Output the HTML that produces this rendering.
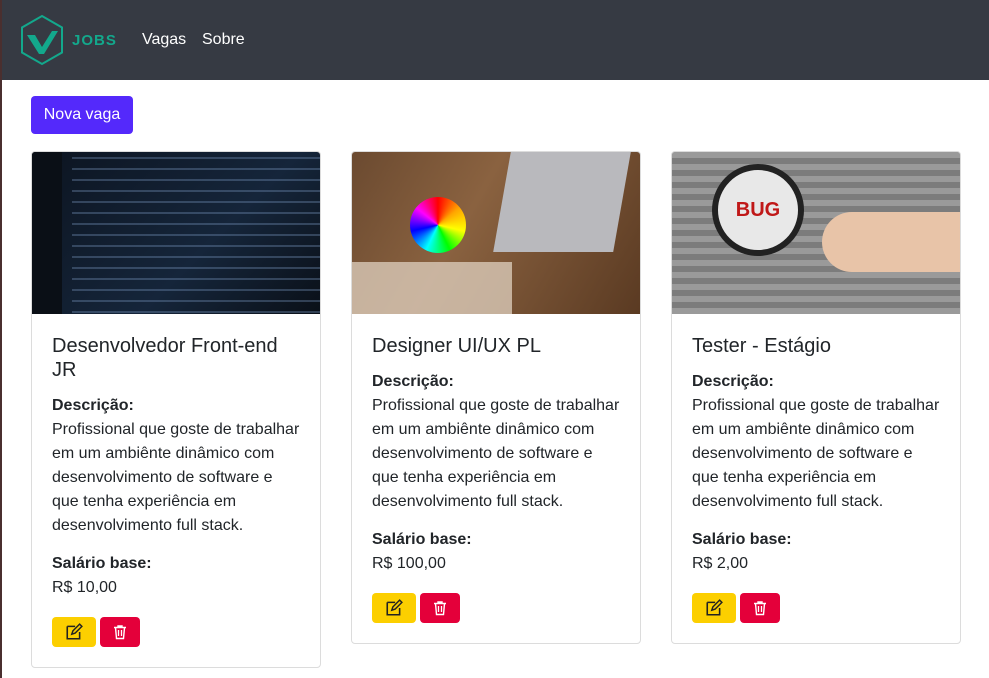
<!DOCTYPE html>
<html><head><meta charset="utf-8"><style>
*{box-sizing:border-box;margin:0;padding:0}
body{width:989px;height:678px;overflow:hidden;background:#fff;font-family:"Liberation Sans",sans-serif;color:#212529;position:relative}
.lb{position:absolute;left:0;top:0;width:2px;height:678px;background:#4a2f2f;z-index:5}
.nav{height:80px;background:#363a43;position:relative}
.nav a{position:absolute;top:31px;color:#fff;font-size:16px;text-decoration:none}
.btn{position:absolute;left:31px;top:96px;width:102px;height:38px;background:#5429fb;border-radius:4px;color:#fff;font-size:16px;line-height:38px;text-align:center}
.card{position:absolute;top:151px;width:290px;border:1px solid #dcdcdc;border-radius:4px;overflow:hidden}
.img{height:162px}
.body{padding:20px 20px 0 20px;font-size:16px;line-height:24px}
h5{font-size:20px;font-weight:400;line-height:24px;margin-bottom:12px}
b{font-weight:700}
.sal{margin-top:14px}
.ab{display:flex;gap:4px;margin-top:17px;margin-bottom:20px}
.e,.d{width:44px;height:30px;border-radius:4px;display:flex;align-items:center;justify-content:center}
.e{background:#fccf00}.d{background:#e4003a;width:40px}
</style></head><body>
<div class="lb"></div>
<div class="nav">
<svg style="position:absolute;left:20px;top:14px" width="100" height="52" viewBox="0 0 100 52">
<polygon points="22,2 42,13.5 42,38.5 22,50 2,38.5 2,13.5" fill="none" stroke="#13a88c" stroke-width="2"/>
<path d="M7,21 L15,21 L22,33 L32,17 L38,17 L24,40 L19,40 Z" fill="#13a88c"/>
<text x="52" y="31" font-family="Liberation Sans" font-weight="900" font-size="15" fill="#13a88c" letter-spacing="1">JOBS</text>
</svg>
<a style="left:142px">Vagas</a><a style="left:202px">Sobre</a>
</div>
<div class="btn">Nova vaga</div>

<svg width="0" height="0" style="position:absolute"><defs>
<symbol id="ed" viewBox="0 0 16 16"><path d="M2 3h7M2 3v11h11V8" fill="none" stroke="#222" stroke-width="1.4"/><path d="M6 10l1-3 6-6 2 2-6 6z" fill="none" stroke="#222" stroke-width="1.3"/></symbol>
<symbol id="tr" viewBox="0 0 16 16"><path d="M2 3.5h12M6 3.5V2h4v1.5M3.5 3.5l1 11h7l1-11" fill="none" stroke="#fff" stroke-width="1.4"/><path d="M6.5 6v6M9.5 6v6" stroke="#fff" stroke-width="1.3"/></symbol>
</defs></svg>

<div class="card" style="left:31px">
<div class="img" style="background:linear-gradient(135deg,#0c1420,#15253a 60%,#0a1018);position:relative">
<div style="position:absolute;left:0;top:0;width:30px;height:162px;background:#0a0f16"></div>
<div style="position:absolute;left:40px;top:0;right:0;bottom:0;background:repeating-linear-gradient(180deg,transparent 0 5px,rgba(120,150,190,.35) 5px 7px,transparent 7px 11px)"></div>
</div>
<div class="body"><h5>Desenvolvedor Front-end JR</h5>
<b>Descrição:</b><br>Profissional que goste de trabalhar em um ambiênte dinâmico com desenvolvimento de software e que tenha experiência em desenvolvimento full stack.<div class="sal"><b>Salário base:</b><br>R$ 10,00</div>
<div class="ab"><div class="e"><svg width="18" height="18"><use href="#ed"/></svg></div><div class="d"><svg width="16" height="18"><use href="#tr"/></svg></div></div></div></div>

<div class="card" style="left:351px">
<div class="img" style="background:linear-gradient(120deg,#6b4a30,#8a6240 40%,#5a3a22);position:relative">
<div style="position:absolute;left:150px;top:0;width:120px;height:100px;background:#b9b9bd;transform:skewX(-10deg)"></div>
<div style="position:absolute;left:58px;top:45px;width:56px;height:56px;border-radius:50%;background:conic-gradient(red,orange,yellow,lime,cyan,blue,magenta,red)"></div>
<div style="position:absolute;left:0;top:110px;width:160px;height:52px;background:#d9c9b8;opacity:.8"></div>
</div>
<div class="body"><h5>Designer UI/UX PL</h5>
<b>Descrição:</b><br>Profissional que goste de trabalhar em um ambiênte dinâmico com desenvolvimento de software e que tenha experiência em desenvolvimento full stack.<div class="sal"><b>Salário base:</b><br>R$ 100,00</div>
<div class="ab"><div class="e"><svg width="18" height="18"><use href="#ed"/></svg></div><div class="d"><svg width="16" height="18"><use href="#tr"/></svg></div></div></div></div>

<div class="card" style="left:671px">
<div class="img" style="background:#8e8e8e;position:relative">
<div style="position:absolute;left:0;top:0;right:0;bottom:0;background:repeating-linear-gradient(180deg,#9a9a9a 0 6px,#7c7c7c 6px 12px)"></div>
<div style="position:absolute;left:40px;top:12px;width:92px;height:92px;border-radius:50%;border:6px solid #222;background:#e8e8e8;text-align:center;line-height:80px;font-weight:700;color:#c01818;font-size:20px">BUG</div>
<div style="position:absolute;left:150px;top:60px;width:140px;height:60px;background:#e8c4a8;border-radius:30px 0 0 30px"></div>
</div>
<div class="body"><h5>Tester - Estágio</h5>
<b>Descrição:</b><br>Profissional que goste de trabalhar em um ambiênte dinâmico com desenvolvimento de software e que tenha experiência em desenvolvimento full stack.<div class="sal"><b>Salário base:</b><br>R$ 2,00</div>
<div class="ab"><div class="e"><svg width="18" height="18"><use href="#ed"/></svg></div><div class="d"><svg width="16" height="18"><use href="#tr"/></svg></div></div></div></div>
</body></html>
